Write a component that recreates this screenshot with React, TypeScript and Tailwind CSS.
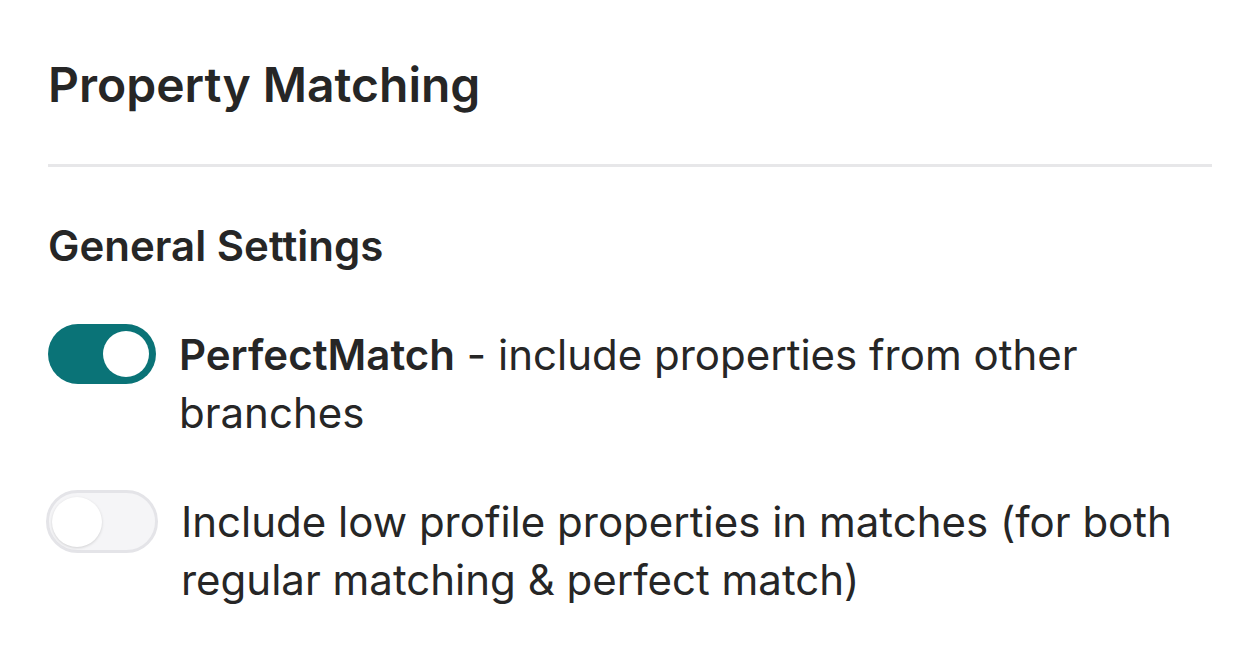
import React from "react";

function Toggle({ on }: { on: boolean }) {
  if (on) {
    return (
      <div className="w-[108px] h-[60px] rounded-full bg-[#0a7377] flex items-center justify-end pr-[7px] shrink-0 ml-[2px]">
        <div className="w-[46px] h-[46px] rounded-full bg-white" />
      </div>
    );
  }
  return (
    <div className="w-[112px] h-[63px] rounded-full bg-[#f5f5f7] border-[3px] border-[#e4e4e8] flex items-center justify-start pl-[3px] shrink-0">
      <div className="w-[50px] h-[50px] rounded-full bg-white shadow-[0_1px_3px_rgba(0,0,0,0.15)]" />
    </div>
  );
}

export default function App() {
  return (
    <div
      className="min-h-[660px] w-[1260px] bg-white text-[#262626] pl-[48px] pr-[48px] pt-[56px]"
      style={{ fontFamily: "Inter, 'Noto Sans', sans-serif" }}
    >
      <h1 className="text-[48px] leading-[58px] font-semibold">Property Matching</h1>
      <div className="mt-[50px] h-[3px] bg-[#e7e7e9]" />
      <h2 className="mt-[54px] text-[42px] leading-[50px] font-semibold">General Settings</h2>
      <div className="mt-[53px] flex flex-col gap-[51px]">
        <div className="flex items-start gap-[23px] -ml-[2px]">
          <div className="w-[112px] flex">
            <Toggle on={true} />
          </div>
          <p className="text-[42px] leading-[58px] pt-[2px]">
            <span className="font-semibold">PerfectMatch</span>
            {" - include properties from other branches"}
          </p>
        </div>
        <div className="flex items-start gap-[23px] -ml-[2px]">
          <div className="w-[112px] flex -mt-[3px]">
            <Toggle on={false} />
          </div>
          <p className="text-[42px] leading-[58px]">
            Include low profile properties in matches (for both regular matching &amp; perfect match)
          </p>
        </div>
      </div>
    </div>
  );
}
